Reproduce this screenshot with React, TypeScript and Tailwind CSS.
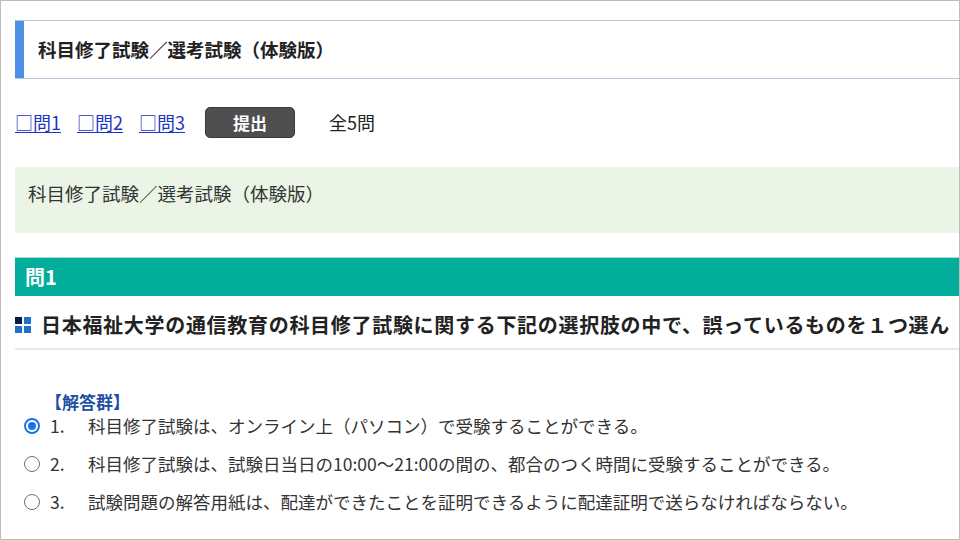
import React from "react";

const options = [
  "科目修了試験は、オンライン上（パソコン）で受験することができる。",
  "科目修了試験は、試験日当日の10:00～21:00の間の、都合のつく時間に受験することができる。",
  "試験問題の解答用紙は、配達ができたことを証明できるように配達証明で送らなければならない。",
];

export default function App() {
  return (
    <div className="w-[960px] h-[540px] overflow-hidden border border-[#bdbdbd] bg-white font-['Noto_Sans_CJK_JP',sans-serif] text-[#333]">
      <div className="w-[1000px] pl-[14px] pt-[19px]">
        {/* Page title */}
        <div className="flex h-[59px] items-center border-y border-[#b4c6da]">
          <div className="h-full w-[9px] shrink-0 bg-[#4d8fe4]" />
          <h1 className="pl-[14px] text-[18.5px] font-bold text-[#222]">科目修了試験／選考試験（体験版）</h1>
        </div>

        {/* Question nav */}
        <div className="mt-[28px] flex h-[31px] items-center text-[18px]">
          <NavLink label="問1" />
          <NavLink label="問2" className="ml-[16px]" />
          <NavLink label="問3" className="ml-[16px]" />
          <button className="ml-[20px] h-[31px] w-[90px] rounded-[5px] border border-[#3a3a3a] bg-[#4f4f4f] text-[17px] font-semibold text-white">
            提出
          </button>
          <span className="ml-[34px] text-[#222]">全5問</span>
        </div>

        {/* Intro box */}
        <div className="mt-[29px] h-[66px] bg-[#eaf5e6] pl-[13px] pt-[13px] text-[18.5px] leading-[26px]">
          科目修了試験／選考試験（体験版）
        </div>

        {/* Question header */}
        <div className="mt-[24px] flex h-[39px] items-center border-t border-[#a9dcd5] bg-[#00ae9b] pl-[10px] text-[20px] font-bold text-white">
          問1
        </div>

        <div className="flex h-[54px] items-center border-b-2 border-[#e8e8e8] pt-[6px]">
          <div className="grid h-[16px] w-[16px] shrink-0 grid-cols-2 grid-rows-2 gap-[2px]">
            <span className="block bg-[#0b1a3e]" />
            <span className="block bg-[#1f6fd1]" />
            <span className="block bg-[#1f6fd1]" />
            <span className="block bg-[#1f6fd1]" />
          </div>
          <p className="ml-[10px] whitespace-nowrap text-[20px] font-bold tracking-[0.7px] text-[#222]">
            日本福祉大学の通信教育の科目修了試験に関する下記の選択肢の中で、誤っているものを１つ選ん
          </p>
        </div>

        {/* Answers */}
        <div className="ml-[30px] mt-[42px] text-[17px] font-bold leading-[20px] text-[#1d4fa3]">【解答群】</div>
        <ul className="mt-[3px] flex flex-col gap-[16px]">
          {options.map((text, i) => (
            <li key={i} className="flex h-[22px] items-center whitespace-nowrap text-[17.5px]">
              <Radio checked={i === 0} />
              <span className="ml-[10px] w-[38px]">{i + 1}.</span>
              <span>{text}</span>
            </li>
          ))}
        </ul>
      </div>
    </div>
  );
}

function NavLink({ label, className = "" }: { label: string; className?: string }) {
  return (
    <a href="#" className={`text-[#1a35c4] underline underline-offset-2 ${className}`}>
      □{label}
    </a>
  );
}

function Radio({ checked }: { checked: boolean }) {
  return checked ? (
    <span className="ml-[9px] flex h-[16px] w-[16px] shrink-0 items-center justify-center rounded-full border-2 border-[#1a73e8] bg-white">
      <span className="h-[8px] w-[8px] rounded-full bg-[#1a73e8]" />
    </span>
  ) : (
    <span className="ml-[9px] h-[16px] w-[16px] shrink-0 rounded-full border border-[#6f6f6f] bg-white" />
  );
}
